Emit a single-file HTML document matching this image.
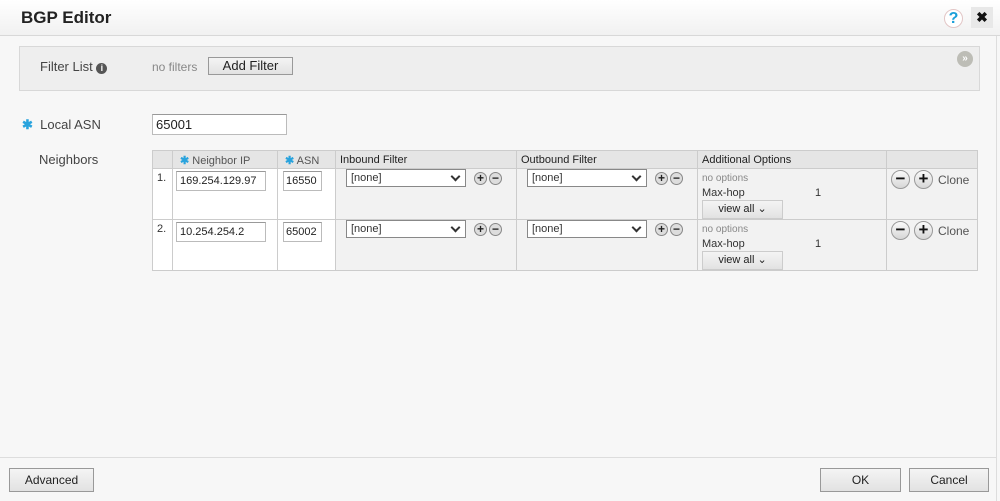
<!DOCTYPE html>
<html><head><meta charset="utf-8"><style>
*{box-sizing:border-box}
body{margin:0;width:1000px;height:501px;background:#f7f7f7;font-family:"Liberation Sans",sans-serif;font-size:12px;color:#333;position:relative;overflow:hidden}
.a{position:absolute}
.hdr{left:0;top:0;width:1000px;height:36px;background:linear-gradient(#fff,#f1f1f1);border-bottom:1px solid #d8d8d8}
.btn{position:absolute;background:linear-gradient(#f4f4f4,#e2e2e2);border:1px solid #999;font-size:12px;color:#222;text-align:center}
input.t{position:absolute;border:1px solid #bbb;border-top-color:#999;background:#fff;font:11px "Liberation Sans",sans-serif;padding:0 3px;height:20px;color:#222}
.sel{position:absolute;border:1px solid #888;background:#fff;height:18px;width:120px;font-size:11px;padding:2px 4px;color:#333}
.sel:after{content:"";position:absolute;right:6px;top:3px;width:5px;height:5px;border-right:2px solid #333;border-bottom:2px solid #333;transform:rotate(45deg)}
.pm{position:absolute;width:13px;height:13px;border-radius:50%;background:#ddd;border:1px solid #888;font-size:12px;line-height:10px;text-align:center;font-weight:bold;color:#222}
.bp{position:absolute;width:19px;height:19px;border-radius:50%;background:linear-gradient(#fafafa,#d6d6d6);border:1px solid #999;font-size:17px;line-height:16px;text-align:center;font-weight:bold;color:#111}
.star{color:#29a3dd;font-weight:bold}
</style></head><body>
<div class="a hdr"></div>
<div class="a" style="left:21px;top:8px;font-size:17px;font-weight:bold;color:#222">BGP Editor</div>
<div class="a" style="left:944px;top:9px;width:19px;height:19px;border-radius:50%;background:#fff;border:1px solid #e2c6c6;color:#1a9fd9;font-weight:bold;font-size:16px;line-height:17px;text-align:center">?</div>
<div class="a" style="left:971px;top:7px;width:22px;height:21px;background:#e8e8e8;text-align:center;font-weight:bold;font-size:14px;line-height:21px;color:#111">✖</div>
<div class="a" style="left:996px;top:36px;width:1px;height:465px;background:#ddd"></div>

<div class="a" style="left:19px;top:46px;width:961px;height:45px;background:#eeeeee;border:1px solid #d8d8d8"></div>
<div class="a" style="left:40px;top:59px;font-size:13px;color:#444">Filter List <span style="display:inline-block;width:11px;height:11px;border-radius:50%;background:#555;color:#fff;font-size:9px;line-height:11px;text-align:center;font-weight:bold">i</span></div>
<div class="a" style="left:152px;top:60px;font-size:12px;color:#888">no filters</div>
<div class="btn" style="left:208px;top:57px;width:85px;height:18px;line-height:16px;font-size:13px">Add Filter</div>
<div class="a" style="left:957px;top:51px;width:16px;height:16px;border-radius:50%;background:#bdbdb6;color:#fff;font-size:10px;line-height:15px;text-align:center;font-weight:bold">»</div>

<div class="a" style="left:22px;top:117px;font-size:13px;color:#444"><span class="star">✱</span>&nbsp; Local ASN</div>
<input class="t" style="left:152px;top:114px;width:135px;height:21px;font-size:13px" value="65001">
<div class="a" style="left:39px;top:152px;font-size:13px;color:#444">Neighbors</div>

<div class="a" style="left:152px;top:150px;width:826px;height:121px;border:1px solid #ccc;background:#f2f2f2"></div>
<div class="a" style="left:153px;top:151px;width:824px;height:17px;background:#e5e5e5"></div>
<div class="a" style="left:153px;top:168px;width:182px;height:102px;background:#fff"></div>
<div class="a" style="left:153px;top:168px;width:824px;height:1px;background:#ccc"></div>
<div class="a" style="left:153px;top:219px;width:824px;height:1px;background:#ccc"></div>
<div class="a" style="left:172px;top:151px;width:1px;height:120px;background:#ccc"></div>
<div class="a" style="left:277px;top:151px;width:1px;height:120px;background:#ccc"></div>
<div class="a" style="left:335px;top:151px;width:1px;height:120px;background:#ccc"></div>
<div class="a" style="left:516px;top:151px;width:1px;height:120px;background:#ccc"></div>
<div class="a" style="left:697px;top:151px;width:1px;height:120px;background:#ccc"></div>
<div class="a" style="left:886px;top:151px;width:1px;height:120px;background:#ccc"></div>

<div class="a" style="left:180px;top:154px;font-size:11px;color:#555"><span class="star">✱</span> Neighbor IP</div>
<div class="a" style="left:285px;top:154px;font-size:11px;color:#555"><span class="star">✱</span> ASN</div>
<div class="a" style="left:340px;top:154px;font-size:11px;color:#222">Inbound Filter</div>
<div class="a" style="left:521px;top:154px;font-size:11px;color:#222">Outbound Filter</div>
<div class="a" style="left:702px;top:154px;font-size:11px;color:#222">Additional Options</div>

<!-- row1 -->
<div class="a" style="left:157px;top:172px;font-size:11px">1.</div>
<input class="t" style="left:176px;top:171px;width:90px" value="169.254.129.97">
<input class="t" style="left:283px;top:171px;width:39px;padding:0 2px" value="16550">
<div class="sel" style="left:346px;top:169px">[none]</div>
<div class="pm" style="left:474px;top:172px">+</div><div class="pm" style="left:489px;top:172px">−</div>
<div class="sel" style="left:527px;top:169px">[none]</div>
<div class="pm" style="left:655px;top:172px">+</div><div class="pm" style="left:670px;top:172px">−</div>
<div class="a" style="left:702px;top:173px;font-size:10px;color:#888">no options</div>
<div class="a" style="left:702px;top:187px;font-size:11px">Max-hop</div>
<div class="a" style="left:815px;top:187px;font-size:11px">1</div>
<div class="btn" style="left:702px;top:200px;width:81px;height:19px;font-size:11px;line-height:17px;border-color:#ccc">view all ⌄</div>
<div class="bp" style="left:891px;top:170px">−</div><div class="bp" style="left:914px;top:170px">+</div>
<div class="a" style="left:938px;top:173px;font-size:12px;color:#555">Clone</div>

<!-- row2 -->
<div class="a" style="left:157px;top:223px;font-size:11px">2.</div>
<input class="t" style="left:176px;top:222px;width:90px" value="10.254.254.2">
<input class="t" style="left:283px;top:222px;width:39px;padding:0 2px" value="65002">
<div class="sel" style="left:346px;top:220px">[none]</div>
<div class="pm" style="left:474px;top:223px">+</div><div class="pm" style="left:489px;top:223px">−</div>
<div class="sel" style="left:527px;top:220px">[none]</div>
<div class="pm" style="left:655px;top:223px">+</div><div class="pm" style="left:670px;top:223px">−</div>
<div class="a" style="left:702px;top:224px;font-size:10px;color:#888">no options</div>
<div class="a" style="left:702px;top:238px;font-size:11px">Max-hop</div>
<div class="a" style="left:815px;top:238px;font-size:11px">1</div>
<div class="btn" style="left:702px;top:251px;width:81px;height:19px;font-size:11px;line-height:17px;border-color:#ccc">view all ⌄</div>
<div class="bp" style="left:891px;top:221px">−</div><div class="bp" style="left:914px;top:221px">+</div>
<div class="a" style="left:938px;top:224px;font-size:12px;color:#555">Clone</div>

<div class="a" style="left:0;top:457px;width:996px;height:1px;background:#ddd"></div>
<div class="btn" style="left:9px;top:468px;width:85px;height:24px;line-height:22px">Advanced</div>
<div class="btn" style="left:820px;top:468px;width:81px;height:24px;line-height:22px">OK</div>
<div class="btn" style="left:909px;top:468px;width:80px;height:24px;line-height:22px">Cancel</div>
</body></html>
